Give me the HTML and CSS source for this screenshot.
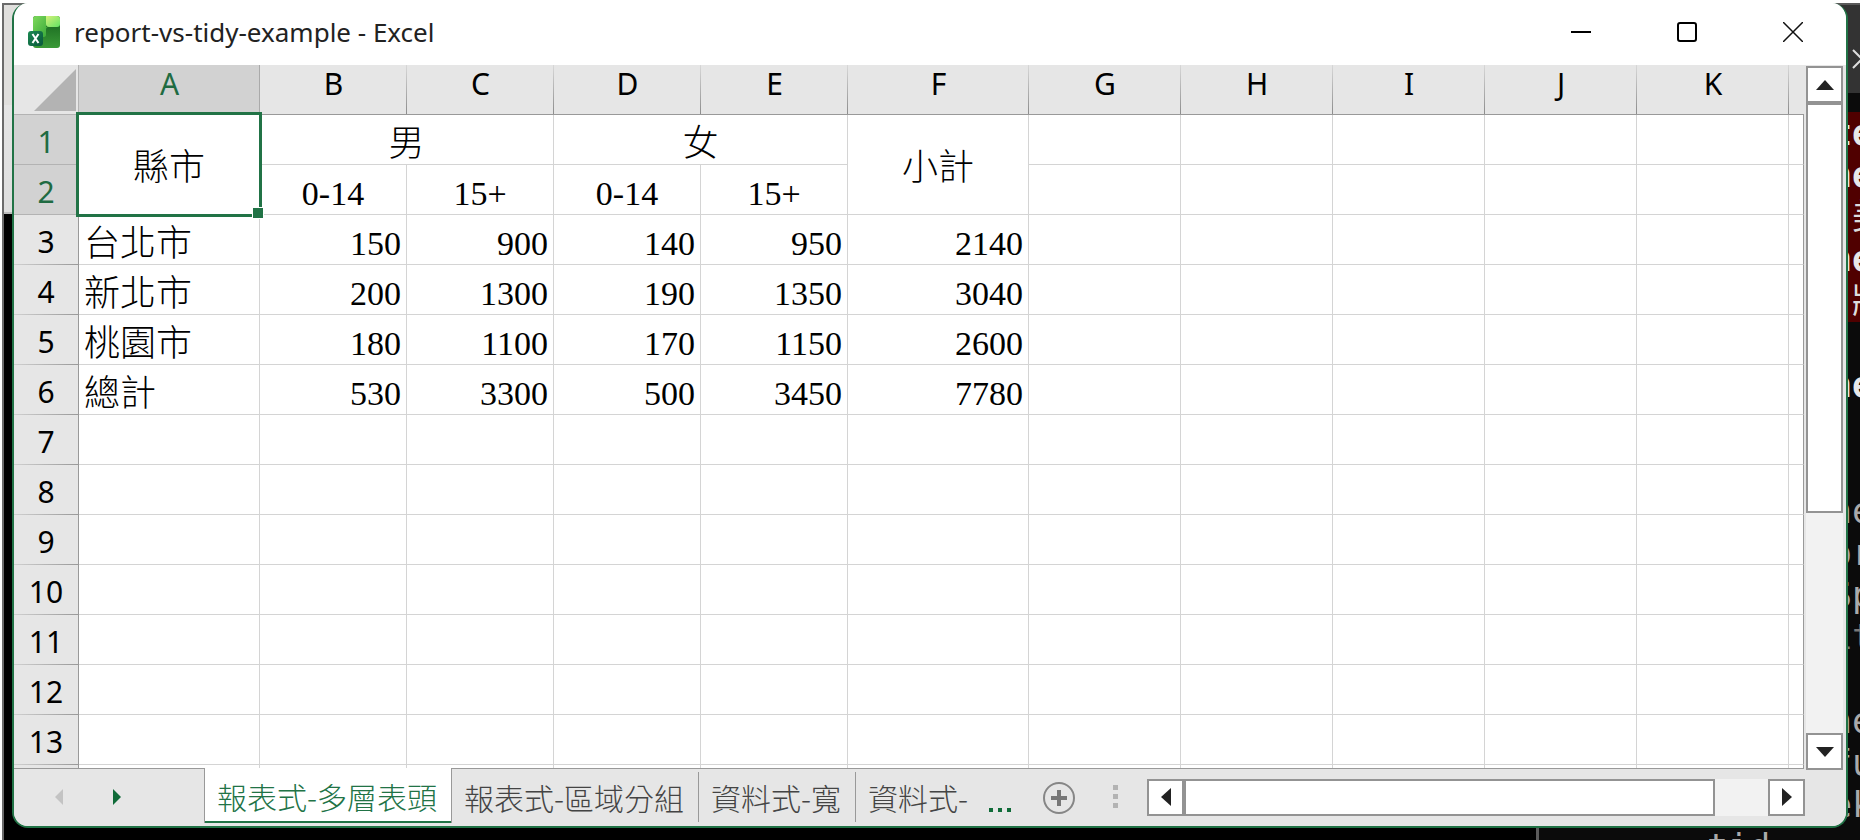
FILE: index.html
```html
<!doctype html>
<html lang="zh-Hant">
<head>
	<meta charset="UTF-8" />
	<title>report-vs-tidy-example - Excel</title>
	<link rel="stylesheet" href="styles.css">
</head>
<body>
	<div class="back-panel"></div>
	<div class="terminal">
		<div class="terminal-bar">
			<svg width="20" height="20" viewBox="0 0 20 20"><path d="M1 1L19 19M19 1L1 19" stroke="#ddd" stroke-width="2"/></svg>
		</div>
		<pre class="error"><b>te
ne</b>
 美
<b>ne</b>
 將</pre>
		<pre>

<b>ne</b>


ne
or
Sp
<i>it</i>

ne
fu
ek
<span class="outdent">tid</span></pre>
	</div>

	<main class="window">
		<header class="titlebar">
			<svg class="logo" width="34" height="34" viewBox="0 0 34 34">
				<defs>
					<linearGradient id="g1" x1="0" y1="0" x2="1" y2="1">
						<stop offset="0" stop-color="#7fd95c"/><stop offset="1" stop-color="#37a838"/>
					</linearGradient>
					<linearGradient id="g2" x1="0" y1="0" x2="1" y2="1">
						<stop offset="0" stop-color="#d5f07a"/><stop offset="1" stop-color="#62e464"/>
					</linearGradient>
					<linearGradient id="g3" x1="0" y1="0" x2="0" y2="1">
						<stop offset="0" stop-color="#14601d"/><stop offset="1" stop-color="#3a9a37"/>
					</linearGradient>
					<linearGradient id="g4" x1="0" y1="0" x2="1" y2="1">
						<stop offset="0" stop-color="#1c8a52"/><stop offset="1" stop-color="#08573b"/>
					</linearGradient>
				</defs>
				<rect x="5" y="1" width="27" height="32" rx="3" fill="url(#g3)"/>
				<path d="M8 1H18V12H20Q18 12 18 15V20Q18 22 15 22H5V4Q5 1 8 1Z" fill="url(#g1)"/>
				<path d="M18 1H29Q32 1 32 4V9Q32 12 29 12H21Q18 12 18 9Z" fill="url(#g2)"/>
				<rect x="0" y="16" width="15" height="15" rx="3" fill="url(#g4)"/>
				<path d="M4.500 19L10.500 28M10.500 19L4.500 28" stroke="#fff" stroke-width="2"/>
			</svg>
			<h1>report-vs-tidy-example - Excel</h1>
			<div class="window-buttons">
				<button type="button" aria-label="最小化"><svg width="20" height="20" viewBox="0 0 20 20"><path d="M0 10H20" stroke="#000" stroke-width="2"/></svg></button>
				<button type="button" aria-label="最大化"><svg width="20" height="20" viewBox="0 0 20 20"><rect x="1" y="1" width="18" height="18" rx="2" fill="none" stroke="#000" stroke-width="2"/></svg></button>
				<button type="button" aria-label="關閉"><svg width="20" height="20" viewBox="0 0 20 20"><path d="M0 0L20 20M20 0L0 20" stroke="#111" stroke-width="1.500"/></svg></button>
			</div>
		</header>

		<section class="sheet">
			<div class="grid">
				<table>
					<colgroup>
						<col class="col-head">
						<col class="col-wide">
						<col class="col-narrow"><col class="col-narrow"><col class="col-narrow"><col class="col-narrow">
						<col class="col-wide">
						<col class="col-base"><col class="col-base"><col class="col-base"><col class="col-base"><col class="col-base">
						<col>
					</colgroup>
					<thead>
						<tr>
							<th class="corner"><svg width="42" height="42" viewBox="0 0 42 42"><path d="M42 0V42H0Z" fill="#b3b3b3"/></svg></th>
							<th class="selected">A</th><th>B</th><th>C</th><th>D</th><th>E</th><th>F</th><th>G</th><th>H</th><th>I</th><th>J</th><th>K</th><th class="edge"></th>
						</tr>
					</thead>
					<tbody>
						<tr>
							<th class="selected">1</th>
							<td rowspan="2" class="merged zh cursor">縣市</td>
							<td colspan="2" class="center zh">男</td>
							<td colspan="2" class="center zh">女</td>
							<td rowspan="2" class="merged zh">小計</td>
							<td></td><td></td><td></td><td></td><td></td><td></td>
						</tr>
						<tr>
							<th class="selected">2</th>
							<td class="center">0-14</td><td class="center">15+</td><td class="center">0-14</td><td class="center">15+</td>
							<td></td><td></td><td></td><td></td><td></td><td></td>
						</tr>
						<tr>
							<th>3</th><td class="zh">台北市</td>
							<td class="num">150</td><td class="num">900</td><td class="num">140</td><td class="num">950</td><td class="num">2140</td>
							<td></td><td></td><td></td><td></td><td></td><td></td>
						</tr>
						<tr>
							<th>4</th><td class="zh">新北市</td>
							<td class="num">200</td><td class="num">1300</td><td class="num">190</td><td class="num">1350</td><td class="num">3040</td>
							<td></td><td></td><td></td><td></td><td></td><td></td>
						</tr>
						<tr>
							<th>5</th><td class="zh">桃園市</td>
							<td class="num">180</td><td class="num">1100</td><td class="num">170</td><td class="num">1150</td><td class="num">2600</td>
							<td></td><td></td><td></td><td></td><td></td><td></td>
						</tr>
						<tr>
							<th>6</th><td class="zh">總計</td>
							<td class="num">530</td><td class="num">3300</td><td class="num">500</td><td class="num">3450</td><td class="num">7780</td>
							<td></td><td></td><td></td><td></td><td></td><td></td>
						</tr>
						<tr><th>7</th><td></td><td></td><td></td><td></td><td></td><td></td><td></td><td></td><td></td><td></td><td></td><td></td></tr>
						<tr><th>8</th><td></td><td></td><td></td><td></td><td></td><td></td><td></td><td></td><td></td><td></td><td></td><td></td></tr>
						<tr><th>9</th><td></td><td></td><td></td><td></td><td></td><td></td><td></td><td></td><td></td><td></td><td></td><td></td></tr>
						<tr><th>10</th><td></td><td></td><td></td><td></td><td></td><td></td><td></td><td></td><td></td><td></td><td></td><td></td></tr>
						<tr><th>11</th><td></td><td></td><td></td><td></td><td></td><td></td><td></td><td></td><td></td><td></td><td></td><td></td></tr>
						<tr><th>12</th><td></td><td></td><td></td><td></td><td></td><td></td><td></td><td></td><td></td><td></td><td></td><td></td></tr>
						<tr><th>13</th><td></td><td></td><td></td><td></td><td></td><td></td><td></td><td></td><td></td><td></td><td></td><td></td></tr>
						<tr><th></th><td></td><td></td><td></td><td></td><td></td><td></td><td></td><td></td><td></td><td></td><td></td><td></td></tr>
					</tbody>
				</table>
			</div>
			<div class="scroll vertical">
				<button type="button" aria-label="向上捲動"><svg width="18" height="10" viewBox="0 0 18 10"><path d="M0 10L9 0L18 10Z" fill="#222"/></svg></button>
				<div class="track"><div class="thumb"></div></div>
				<button type="button" aria-label="向下捲動"><svg width="18" height="10" viewBox="0 0 18 10"><path d="M0 0L9 10L18 0Z" fill="#222"/></svg></button>
			</div>
		</section>

		<footer class="sheetbar">
			<div class="sheet-nav">
				<button type="button" aria-label="上一個" disabled><svg width="8" height="16" viewBox="0 0 8 16"><path d="M8 0V16L0 8Z" fill="#c3c3c3"/></svg></button>
				<button type="button" aria-label="下一個"><svg width="8" height="16" viewBox="0 0 8 16"><path d="M0 0V16L8 8Z" fill="#0f6b38"/></svg></button>
			</div>
			<nav class="tabs">
				<button type="button" class="active">報表式-多層表頭</button>
				<button type="button">報表式-區域分組</button>
				<button type="button">資料式-寬</button>
				<button type="button">資料式-</button>
			</nav>
			<button type="button" class="more" aria-label="更多工作表"><svg width="24" height="4" viewBox="0 0 24 4"><path d="M0 0H4V4H0ZM9 0H13V4H9ZM18 0H22V4H18Z" fill="#0f6b38"/></svg></button>
			<button type="button" class="add" aria-label="新增工作表"><svg width="32" height="32" viewBox="0 0 32 32"><circle cx="16" cy="16" r="15" fill="none" stroke="#868686" stroke-width="2"/><path d="M16 8V24M8 16H24" stroke="#777" stroke-width="4"/></svg></button>
			<svg class="grip" width="6" height="24" viewBox="0 0 6 24"><path d="M0 0H5V5H0ZM0 9H5V14H0ZM0 18H5V23H0Z" fill="#b3b3b3"/></svg>
			<div class="scroll horizontal">
				<button type="button" aria-label="向左捲動"><svg width="10" height="18" viewBox="0 0 10 18"><path d="M10 0V18L0 9Z" fill="#222"/></svg></button>
				<div class="track"><div class="thumb"></div></div>
				<button type="button" aria-label="向右捲動"><svg width="10" height="18" viewBox="0 0 10 18"><path d="M0 0V18L10 9Z" fill="#222"/></svg></button>
			</div>
		</footer>
	</main>
</body>
</html>
```
FILE: styles.css
```css
*{
	margin: 0;
	padding: 0;
	box-sizing: border-box;
}
html{
	height: 100%;
	overflow: hidden;
}
body{
	position: relative;
	height: 100%;
	padding: 3px 12px 12px;
	overflow: hidden;
	background: linear-gradient(#fff 3px,transparent 3px),linear-gradient(90deg,#fff 2px,#000 2px);
	font-family: "Noto Sans","Noto Sans CJK TC",sans-serif;
}
button{
	border: 0;
	background: none;
	font: inherit;
	color: inherit;
}
svg{
	display: block;
}

/* windows behind */
.back-panel{
	position: absolute;
	top: 3px;
	left: 2px;
	width: 80px;
	height: calc(100% - 3px);
	border: 2px solid #6b6b6b;
	border-width: 2px 0 0 2px;
	background: linear-gradient(#e0dfdd 100px,#e5e5e5 100px,#dedede 207px,#bbb 207px,#bbb 209px,#000 209px);
}
.terminal{
	position: absolute;
	top: 3px;
	right: 0;
	width: 324px;
	height: calc(100% - 3px);
	border: 2px solid #5a5a5a;
	border-width: 2px 0 0 3px;
	background: #0b0b0b;
	overflow: hidden;
}
.terminal-bar{
	height: 88px;
	margin-bottom: 19px;
	padding: 44px 0 0 313px;
	background: #333;
}
.terminal pre{
	padding-left: 292px;
	font-family: "DejaVu Sans Mono","Noto Sans CJK TC",monospace;
	font-size: 35px;
	line-height: 42px;
	color: #aaa;
}
.terminal pre b{
	color: #e8e8e8;
}
.terminal pre i{
	font-style: normal;
	color: #777;
}
.terminal .error{
	background: #500000;
	color: #ddd;
}
.outdent{
	margin-left: -124px;
}

.window{
	position: relative;
	display: flex;
	flex-direction: column;
	height: 100%;
	border: 2px solid #217346;
	border-top: 0;
	border-radius: 16px;
	background: #e6e6e6;
	overflow: hidden;
}
.titlebar{
	display: flex;
	align-items: center;
	height: 62px;
	flex: none;
	padding: 0 0 4px 14px;
	background: #fff;
}
.titlebar h1{
	flex: 1;
	margin-left: 12px;
	font-size: 26px;
	font-weight: 400;
	line-height: 36px;
	color: #222;
}
.window-buttons{
	display: flex;
}
.window-buttons button{
	display: grid;
	place-items: center;
	width: 106px;
	height: 58px;
}

.sheet{
	display: flex;
	flex: 1;
	min-height: 0;
}
.grid{
	flex: 1;
	min-width: 0;
	overflow: hidden;
}
table{
	width: 100%;
	table-layout: fixed;
	border-spacing: 0;
	background: #fff;
}
.col-head{ width: 65px; }
.col-wide{ width: 181px; }
.col-narrow{ width: 147px; }
.col-base{ width: 152px; }
tr{
	height: 50px;
}
th{
	font-size: 30px;
	font-weight: 400;
	line-height: 38px;
	color: #000;
}
thead th{
	height: 50px;
	padding-bottom: 11px;
	border-bottom: 1px solid #999;
	background: linear-gradient(#d8d8d8,#8c8c8c) right/1px 100% no-repeat #e6e6e6;
}
thead .edge{
	background: #e6e6e6;
}
thead .corner{
	padding: 0 3px 0 0;
	border-color: #b3b3b3;
	background: linear-gradient(#b3b3b3,#b3b3b3) right/1px 100% no-repeat #e6e6e6;
}
.corner svg{
	margin-left: auto;
}
tbody th{
	height: 50px;
	padding-top: 4px;
	border-right: 1px solid #999;
	background: linear-gradient(90deg,#d0d0d0,#999) bottom/100% 1px no-repeat #e6e6e6;
}
thead .selected{
	background: linear-gradient(#aaa,#aaa) right/1px 100% no-repeat #d2d2d2;
	color: #1f6b42;
}
tbody .selected{
	background: linear-gradient(#b3b3b3,#b3b3b3) bottom/100% 1px no-repeat #d2d2d2;
	color: #1f6b42;
}
td{
	padding: 0 5px;
	border-right: 1px solid #d4d4d4;
	border-bottom: 1px solid #d4d4d4;
	vertical-align: bottom;
	font-family: "Liberation Serif","Noto Sans CJK TC",serif;
	font-size: 34px;
	line-height: 40px;
	color: #000;
	white-space: nowrap;
}
td:last-child{
	padding: 0;
	border-right-color: #999;
}
td.zh{
	font-size: 36px;
	font-weight: 300;
}
td.center{
	text-align: center;
}
td.num{
	text-align: right;
}
td.merged{
	padding-top: 6px;
	vertical-align: middle;
	text-align: center;
}
/* selection box and fill handle */
.cursor{
	position: relative;
}
.cursor::before{
	content: "";
	position: absolute;
	inset: -3px;
	border: 3px solid #217346;
}
.cursor::after{
	content: "";
	position: absolute;
	right: -5px;
	bottom: -5px;
	width: 10px;
	height: 10px;
	border: 1px solid #fff;
	background: #217346;
}

.scroll{
	display: flex;
	background: #f2f2f2;
}
.scroll button{
	display: grid;
	place-items: center;
	flex: none;
	width: 37px;
	height: 37px;
}
.scroll button,.thumb{
	border: 2px solid #939393;
	background: #fff;
}
.track{
	flex: 1;
}
.vertical{
	flex-direction: column;
	width: 37px;
	margin: 1px 3px -2px 2px;
	z-index: 1;
}
.vertical .thumb{
	height: 65%;
}
.horizontal{
	flex: 1;
	margin: 0 41px 0 28px;
}
.horizontal .thumb{
	width: 91%;
	height: 37px;
}

.sheetbar{
	display: flex;
	align-items: center;
	flex: none;
	height: 58px;
	background: linear-gradient(#999,#999) 0 0/calc(100% - 42px) 1px no-repeat #e6e6e6;
}
.sheet-nav{
	display: flex;
	gap: 50px;
	width: 190px;
	padding-left: 41px;
}
.tabs{
	display: flex;
	height: 100%;
}
.tabs button{
	height: 50px;
	margin-top: 4px;
	padding: 0 14px 0 12px;
	border-right: 1px solid #999;
	font-size: 30px;
	font-weight: 300;
	font-family: "Noto Sans CJK TC",sans-serif;
	line-height: 48px;
	color: #444;
}
.tabs button:last-child{
	border-right: 0;
}
.tabs .active{
	height: 55px;
	margin-top: 0;
	border: 1px solid #999;
	border-width: 0 1px;
	background: linear-gradient(#217346,#217346) bottom/100% 2px no-repeat #fff;
	line-height: 56px;
	color: #217346;
}
.more{
	margin: 26px 0 0 7px;
}
.add{
	margin: 2px 38px 0 30px;
}
```
